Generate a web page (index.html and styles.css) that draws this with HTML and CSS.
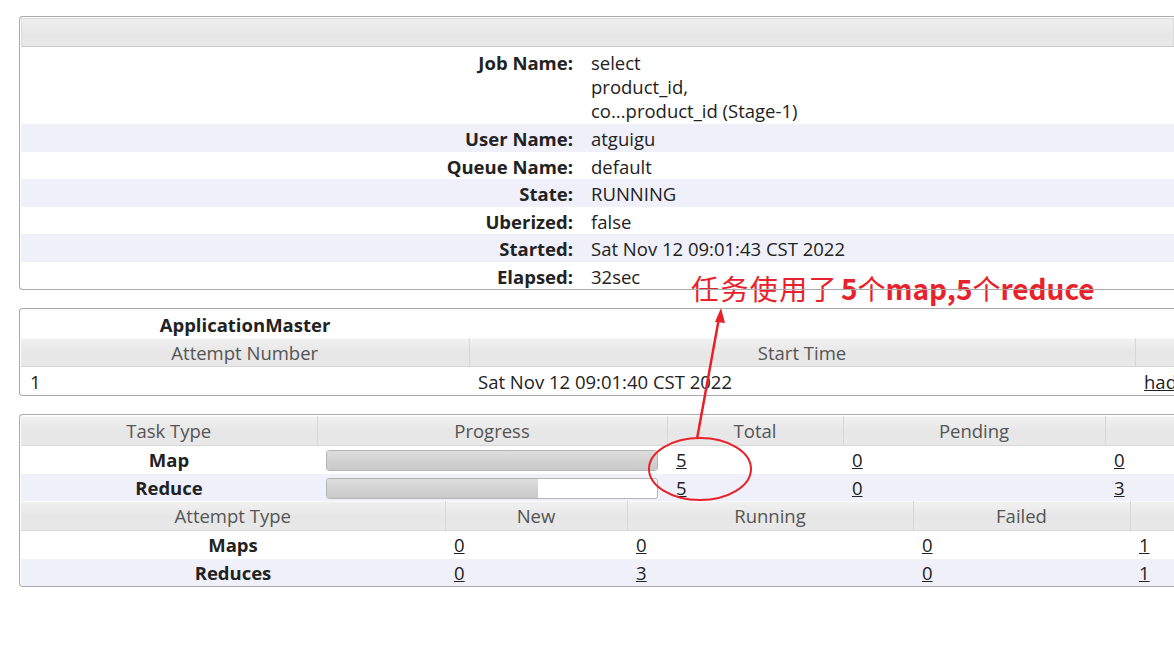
FILE: index.html
```html
<!DOCTYPE html>
<html>
<head>
<meta charset="utf-8">
<link rel="stylesheet" href="styles.css">
</head>
<body>
<div class="page">
  <div class="box info">
    <div class="info-head"></div>
    <div class="info-row first"><div class="lbl">Job Name:</div><div class="val">select<br>product_id,<br>co...product_id (Stage-1)</div></div>
    <div class="info-row odd"><div class="lbl">User Name:</div><div class="val">atguigu</div></div>
    <div class="info-row"><div class="lbl">Queue Name:</div><div class="val">default</div></div>
    <div class="info-row odd"><div class="lbl">State:</div><div class="val">RUNNING</div></div>
    <div class="info-row"><div class="lbl">Uberized:</div><div class="val">false</div></div>
    <div class="info-row odd"><div class="lbl">Started:</div><div class="val">Sat Nov 12 09:01:43 CST 2022</div></div>
    <div class="info-row"><div class="lbl">Elapsed:</div><div class="val">32sec</div></div>
  </div>

  <div class="box am">
    <table class="grid">
      <colgroup><col class="c-am1"><col class="c-am2"><col></colgroup>
      <tr class="cap"><th>ApplicationMaster</th><th></th><th></th></tr>
      <tr class="hd"><th>Attempt Number</th><th>Start Time</th><th></th></tr>
      <tr class="row"><td class="left">1</td><td class="left">Sat Nov 12 09:01:40 CST 2022</td><td class="left"><a href="#">had</a></td></tr>
    </table>
  </div>

  <div class="box tasks">
    <table class="grid">
      <colgroup><col class="c-t1"><col class="c-t2"><col class="c-t3"><col class="c-t4"><col></colgroup>
      <tr class="hd"><th>Task Type</th><th>Progress</th><th>Total</th><th>Pending</th><th></th></tr>
      <tr class="row"><td class="name">Map</td><td><div class="bar"><div class="fill" style="width:100%"></div></div></td><td class="left"><a href="#">5</a></td><td class="left"><a href="#">0</a></td><td class="left"><a href="#">0</a></td></tr>
      <tr class="row odd"><td class="name">Reduce</td><td><div class="bar"><div class="fill" style="width:64%"></div></div></td><td class="left"><a href="#">5</a></td><td class="left"><a href="#">0</a></td><td class="left"><a href="#">3</a></td></tr>
    </table>
    <table class="grid">
      <colgroup><col class="c-a1"><col class="c-a2"><col class="c-a3"><col class="c-a4"><col></colgroup>
      <tr class="hd"><th>Attempt Type</th><th>New</th><th>Running</th><th>Failed</th><th></th></tr>
      <tr class="row"><td class="name">Maps</td><td class="left"><a href="#">0</a></td><td class="left"><a href="#">0</a></td><td class="left"><a href="#">0</a></td><td class="left"><a href="#">1</a></td></tr>
      <tr class="row odd"><td class="name">Reduces</td><td class="left"><a href="#">0</a></td><td class="left"><a href="#">3</a></td><td class="left"><a href="#">0</a></td><td class="left"><a href="#">1</a></td></tr>
    </table>
  </div>

  <div class="note"><span class="cn">任务使用了</span><b>5<span class="thin">个</span>map,5<span class="thin">个</span>reduce</b></div>
  <svg class="marks" width="1174" height="651" viewBox="0 0 1174 651">
    <ellipse cx="700" cy="469" rx="51" ry="31" fill="none" stroke="#e8212a" stroke-width="2"/>
    <line x1="697" y1="439" x2="719" y2="318" stroke="#e8212a" stroke-width="2.5"/>
    <polygon points="721,308 715,322 725,323" fill="#e8212a"/>
  </svg>
</div>
</body>
</html>
```

FILE: styles.css
```css
html, body {
  margin: 0;
  padding: 0;
  overflow: hidden;
  background: #fff;
}
body {
  font-family: "Open Sans", "Noto Sans", sans-serif;
  font-size: 18.5px;
  color: #222;
}
.page {
  position: relative;
  width: 1174px;
  height: 651px;
  padding: 16px 0 0 19px;
  box-sizing: border-box;
}
.box {
  width: 1155px;
  border: 1px solid #aaa;
  border-right: none;
  border-radius: 4px 0 0 4px;
  padding: 1px 0 0 1px;
  background: #fff;
  box-sizing: border-box;
  overflow: hidden;
}
.info {
  position: relative;
  overflow: visible;
}
.info::after {
  content: "";
  position: absolute;
  left: 3px;
  right: 0;
  bottom: -1px;
  height: 1px;
  background: #aaa;
  z-index: 3;
}
.info-head {
  height: 29px;
  background: linear-gradient(#eeeeee, #e6e6e6 60%, #e9e9e9);
  border: 1px solid #dcdcdc;
  border-bottom-color: #c8c8c8;
  box-sizing: border-box;
}
.info-row {
  display: flex;
  gap: 18px;
  height: 27.5px;
  line-height: 27.5px;
  padding-top: 1px;
  box-sizing: border-box;
}
.info-row.first {
  height: 77px;
  line-height: 24px;
  padding-top: 4px;
}
.info-row.odd {
  background: #f0f0fb;
}
.lbl {
  width: 552px;
  text-align: right;
  font-weight: bold;
  flex: none;
}
.val {
  flex: 1;
  white-space: nowrap;
}
.am {
  margin-top: 18px;
}
.tasks {
  margin-top: 18px;
}
.grid {
  width: 1300px;
  table-layout: fixed;
  border-collapse: collapse;
}
.grid th, .grid td {
  padding: 0 9px;
  white-space: nowrap;
  overflow: hidden;
}
.c-am1 { width: 448px; }
.c-am2 { width: 666px; }
.c-t1 { width: 296px; }
.c-t2 { width: 350px; }
.c-t3 { width: 176px; }
.c-t4 { width: 262px; }
.c-a1 { width: 424px; }
.c-a2 { width: 182px; }
.c-a3 { width: 286px; }
.c-a4 { width: 217px; }
.cap th {
  height: 28px;
  line-height: 26px;
  padding-top: 2px;
  font-weight: bold;
  text-align: center;
  background: #fff;
  box-sizing: border-box;
}
.hd th {
  height: 29px;
  line-height: 27px;
  font-weight: normal;
  color: #555;
  text-align: center;
  background: linear-gradient(#f1f1f1, #e6e6e6 55%, #e9e9e9);
  border-right: 1px solid #d6d6d6;
  box-shadow: inset 0 1px #fafafa, inset 0 -1px #d6d6d6;
}
.tasks .hd th {
  height: 30px;
  line-height: 30px;
}
.row td {
  height: 28px;
  line-height: 27px;
  padding-top: 1px;
  box-sizing: border-box;
}
.tasks .row td {
  height: 27.5px;
  line-height: 26px;
}
.row.odd td {
  background: #f0f0fb;
}
.left { text-align: left; }
.name {
  text-align: center;
  font-weight: bold;
}
a {
  color: #222;
  text-decoration: underline;
}
.bar {
  height: 21px;
  border: 1px solid #b4b4b4;
  border-radius: 3px;
  background: #fff;
  overflow: hidden;
  box-sizing: border-box;
  margin-top: 1px;
}
.fill {
  height: 100%;
  background: linear-gradient(#dddddd, #c9c9c9);
}
.note {
  position: absolute;
  left: 691px;
  top: 269px;
  font-family: "Noto Sans CJK SC", sans-serif;
  font-size: 28px;
  line-height: 38px;
  color: #e8212a;
  z-index: 2;
  white-space: nowrap;
}
.cn {
  letter-spacing: 1.4px;
}
.note b {
  font-weight: bold;
  margin-left: 3px;
}
.note .thin {
  font-weight: normal;
}
.marks {
  position: absolute;
  left: 0;
  top: 0;
  z-index: 4;
  pointer-events: none;
}
```
